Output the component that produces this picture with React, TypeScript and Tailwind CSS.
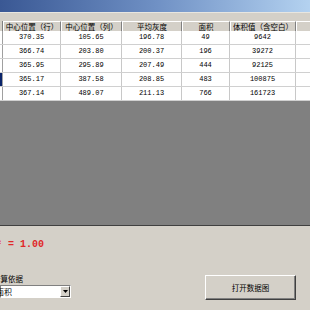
import React from 'react'

const cols = [
  { title: '中心位置（行）', w: 'w-[58px]' },
  { title: '中心位置（列）', w: 'w-[61px]' },
  { title: '平均灰度', w: 'w-[60px]' },
  { title: '面积', w: 'w-[48px]' },
  { title: '体积值（含空白）', w: 'w-[66px]' },
  { title: '体积值', w: 'w-[60px]' },
]

const rows = [
  ['370.35', '105.65', '196.78', '49', '9642', ''],
  ['366.74', '203.80', '200.37', '196', '39272', ''],
  ['365.95', '295.89', '207.49', '444', '92125', ''],
  ['365.17', '387.58', '208.85', '483', '100875', ''],
  ['367.14', '489.07', '211.13', '766', '161723', ''],
]

export default function App() {
  return (
    <div className="w-[310px] h-[310px] overflow-hidden bg-[#d4d0c8] flex flex-col font-['Noto_Sans_CJK_SC',sans-serif] text-black">
      {/* title bar */}
      <div className="h-[12px] shrink-0 bg-gradient-to-r from-[#3a5894] via-[#6f90c4] to-[#b4d2f0]" />
      <div className="h-[9px] shrink-0 bg-[#d4d0c8] border-t border-[#e8e6e0]" />

      {/* grid */}
      <div className="h-[205px] shrink-0 bg-[#808080] border-b border-[#404040] overflow-hidden">
        <div className="flex h-[10px] bg-[#d4d0c8]">
          <div className="w-[3px] shrink-0 border-r border-[#808080]" />
          {cols.map((c) => (
            <div
              key={c.title}
              className={`${c.w} shrink-0 flex items-center justify-center text-[7.5px] leading-none whitespace-nowrap overflow-hidden border-t border-l border-white border-r border-r-[#808080]`}
            >
              {c.title}
            </div>
          ))}
        </div>
        {rows.map((r, i) => (
          <div key={i} className="flex h-[14px] bg-white border-b border-[#d0d0d0]">
            <div className={`w-[3px] shrink-0 border-r border-[#a0a0a0] ${i === 3 ? 'bg-[#0a246a]' : 'bg-white'}`} />
            {r.map((v, j) => (
              <div
                key={j}
                className={`${cols[j].w} shrink-0 flex items-center justify-center text-[7px] font-['Liberation_Mono',monospace] border-r border-[#c8c8c8]`}
              >
                {v}
              </div>
            ))}
          </div>
        ))}
      </div>

      {/* lower panel */}
      <div className="flex-1 flex flex-col">
        <div className="mt-[11px] ml-[-10px] h-[14px] flex items-center font-['Liberation_Mono',monospace] font-bold text-[10px] text-[#e02828] whitespace-pre">
          R² <span className="text-[#e02828]">=</span> 1.00
        </div>
        <div className="mt-[23px] flex items-start justify-between pr-[14px]">
          <div className="flex flex-col ml-[-7px]">
            <span className="text-[7.5px] leading-[10px] whitespace-nowrap">计算依据</span>
            <div className="mt-[1px] ml-[7px] w-[71px] h-[13px] bg-white border border-t-[#808080] border-l-[#808080] border-b-[#ffffff] border-r-[#ffffff] flex items-center">
              <span className="flex-1 ml-[-5px] text-[8px] leading-none whitespace-nowrap">面积</span>
              <div className="w-[10px] h-[11px] bg-[#d4d0c8] border border-t-white border-l-white border-b-[#404040] border-r-[#404040] flex items-center justify-center">
                <svg width="5" height="3" viewBox="0 0 5 3">
                  <path d="M0 0h5L2.5 3z" fill="#000" />
                </svg>
              </div>
            </div>
          </div>
          <button className="mt-[1px] w-[91px] h-[25px] bg-[#d4d0c8] border border-t-white border-l-white border-b-[#404040] border-r-[#404040] shadow-[inset_-1px_-1px_0_#808080] flex items-center justify-center text-[7.5px] leading-none">
            打开数据图
          </button>
        </div>
      </div>
    </div>
  )
}
